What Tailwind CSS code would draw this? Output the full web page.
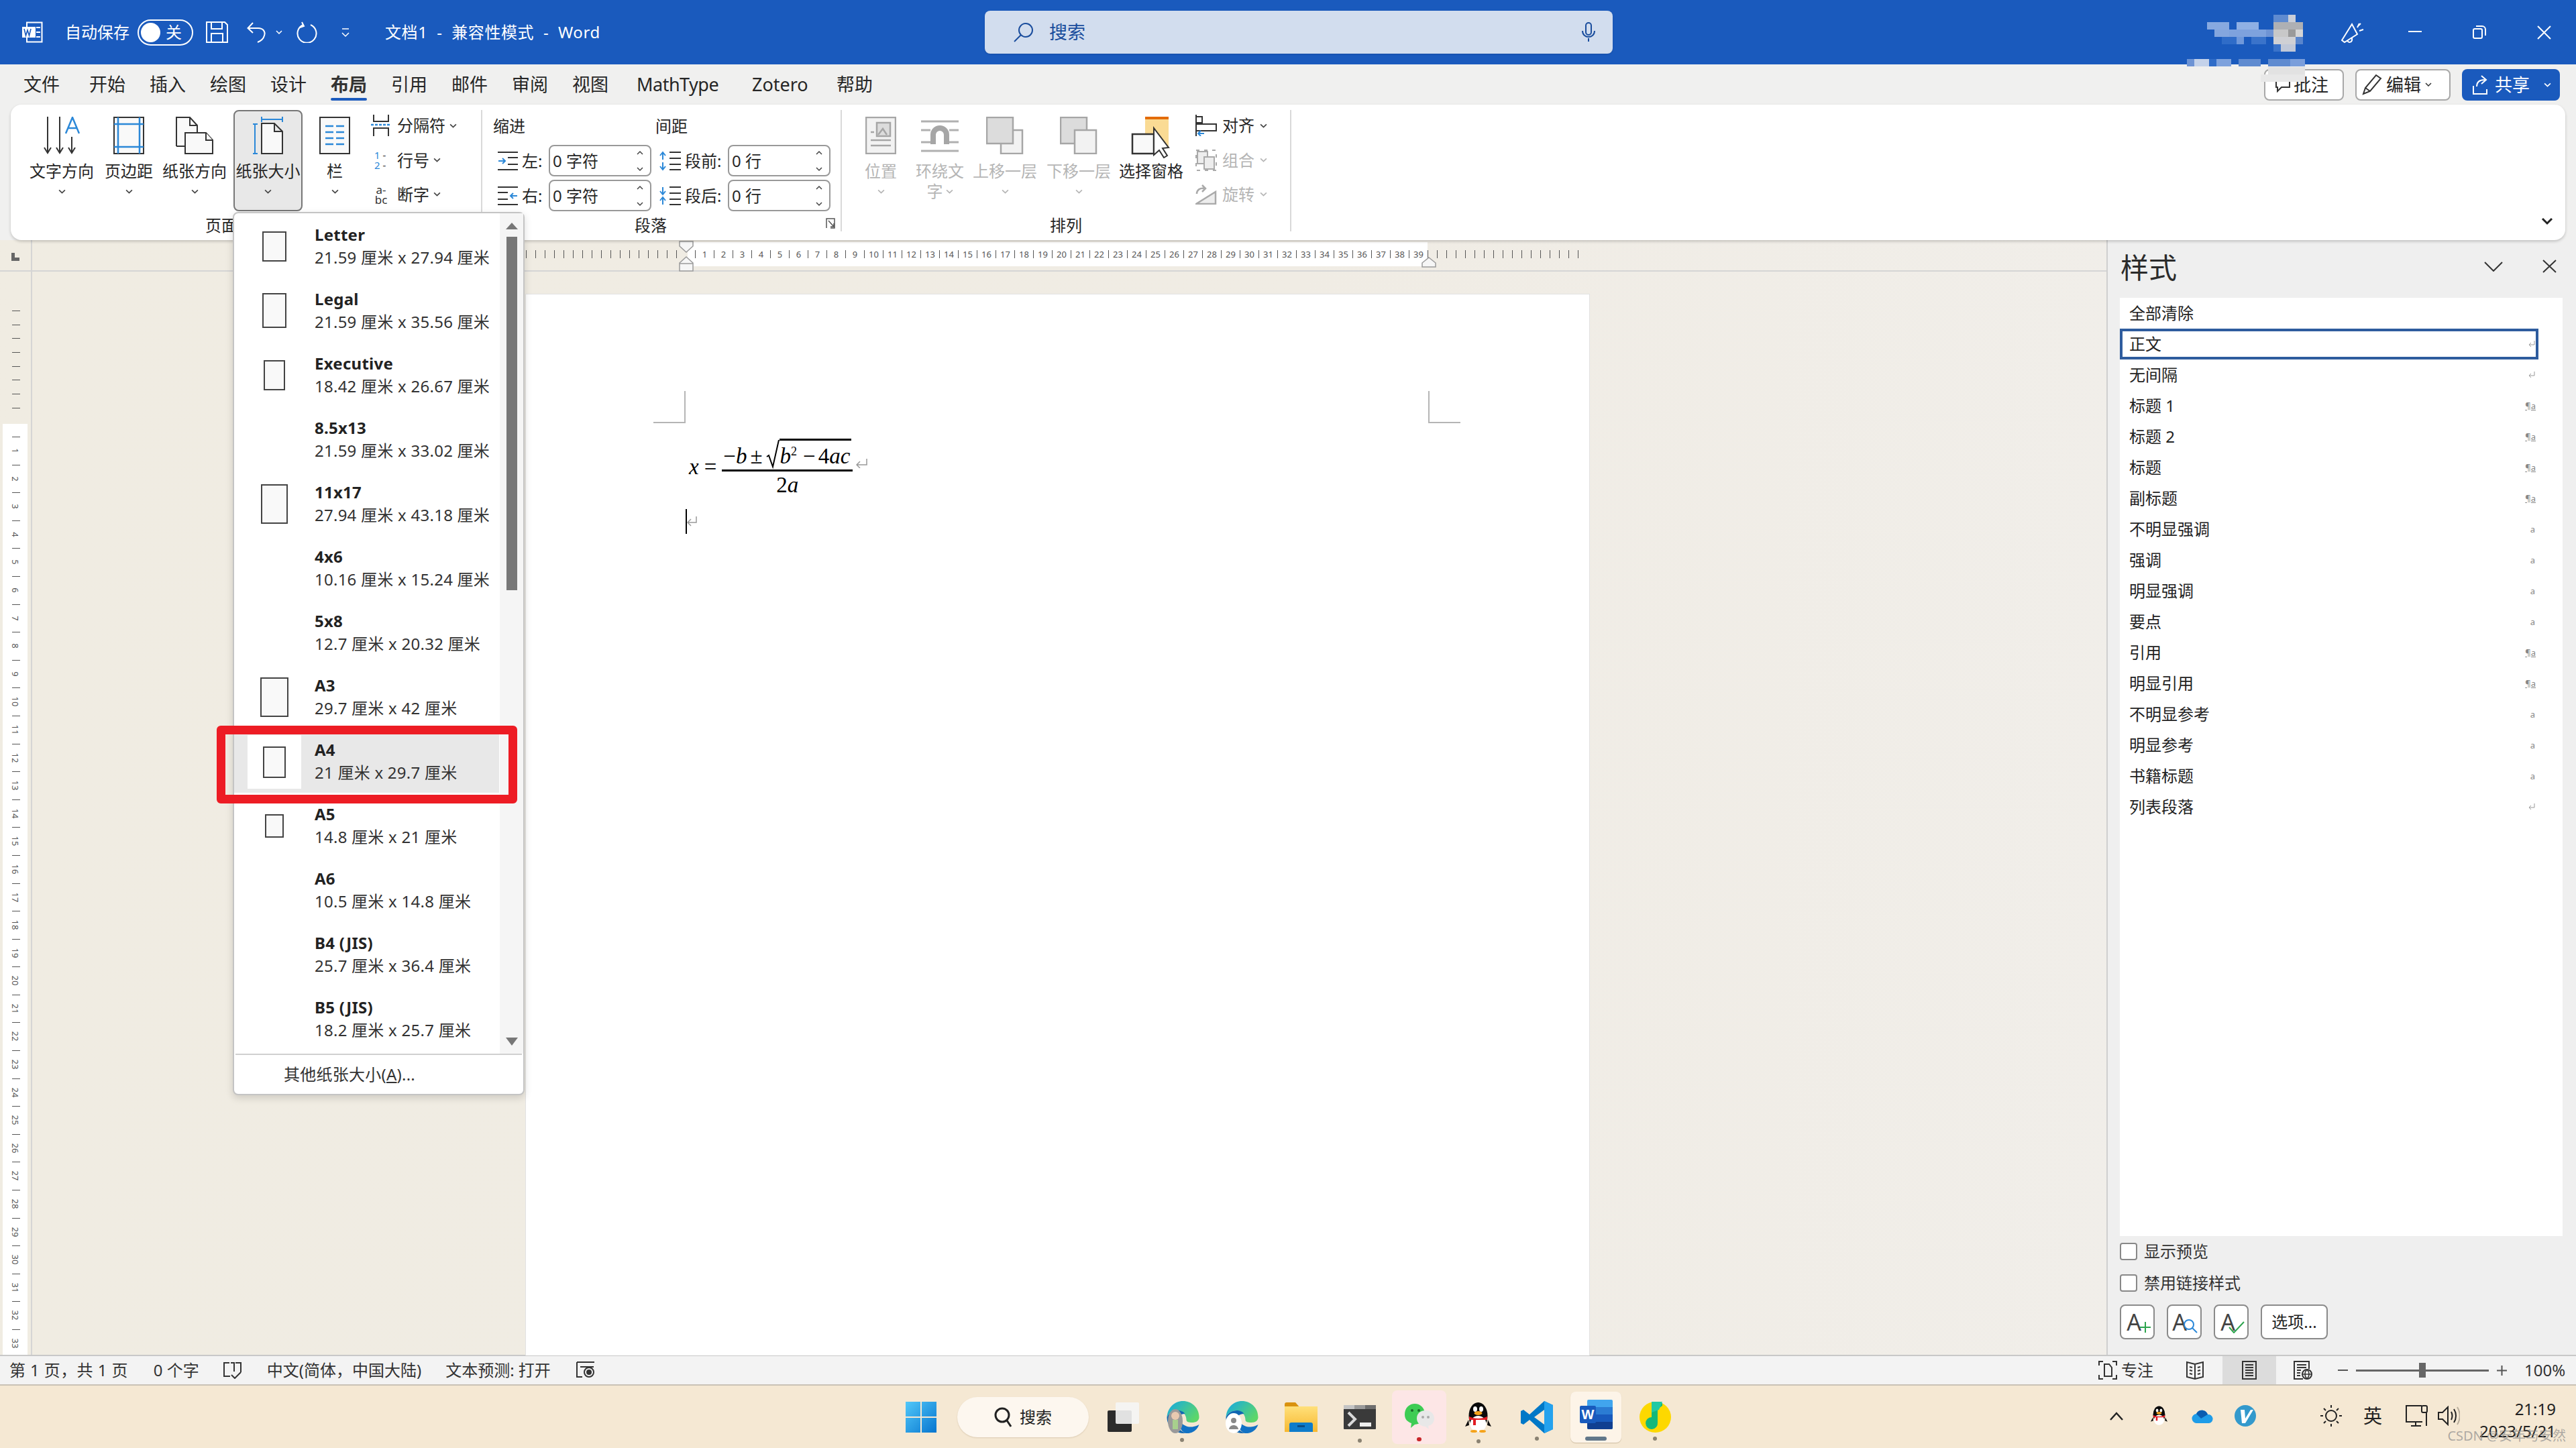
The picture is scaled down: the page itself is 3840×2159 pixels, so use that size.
<!DOCTYPE html>
<html lang="zh-CN">
<head>
  <meta charset="UTF-8">
  <title>文档1 - 兼容性模式 - Word</title>
  <script src="https://cdn.jsdelivr.net/npm/@tailwindcss/browser@4"></script>
</head>
<body class="relative w-[3840px] h-[2159px] overflow-hidden flex flex-col bg-[#f0f0ef] text-[#262626] text-[24px] leading-[28px] font-['Noto_Sans','Noto_Sans_CJK_SC',sans-serif]">

  <!-- Title bar -->
  <header class="h-[96px] shrink-0 bg-[#1a5abd] text-white flex items-center">
    <svg class="ml-[32px]" width="32" height="32" viewBox="0 0 32 32"><rect x="8" y="1.5" width="22.5" height="29" fill="none" stroke="#fff" stroke-width="2"/><rect x="1" y="8" width="20" height="16" fill="#fff"/><path d="M4 11l2.5 10 2.5-8 2.500 8 2.500-10" stroke="#1a5abd" stroke-width="1.600" fill="none"/><path d="M22 9h6M22 16h6M22 23h6" stroke="#fff" stroke-width="2"/></svg>
    <span class="ml-[33px] w-[96px] whitespace-nowrap">自动保存</span>
    <div class="ml-[12px] w-[83px] h-[39px] rounded-full border-2 border-white flex items-center pl-[3px]">
      <span class="w-[29px] h-[29px] rounded-full bg-white"></span><span class="ml-[8px] leading-[26px]">关</span>
    </div>
    <svg class="ml-[19px]" width="33" height="32" viewBox="0 0 33 32" fill="none" stroke="#fff" stroke-width="2"><path d="M1 1h27l4 4v26H1zM8 1v10h16V1M8 31V18h17v13"/></svg>
    <svg class="ml-[28px]" width="30" height="32" viewBox="0 0 30 32" fill="none" stroke="#fff" stroke-width="2"><path d="M2 10h15c7 0 11 5 9 11-1 4-5 8-10 10"/><path d="M9 2L1.500 10 9 17"/></svg>
    <svg class="ml-[13px]" width="10" height="6" viewBox="0 0 10 6" fill="none" stroke="#fff" stroke-width="1.500"><path d="M1 1l4 4 4-4"/></svg>
    <svg class="ml-[20px]" width="33" height="32" viewBox="0 0 33 32" fill="none" stroke="#fff" stroke-width="2"><path d="M11 5a14 14 0 1 0 11 0"/><path d="M9 1l3 6-6 2"/></svg>
    <svg class="ml-[34px]" width="14" height="15" viewBox="0 0 14 15" fill="none" stroke="#fff" stroke-width="1.500"><path d="M2 2h10M2 8l5 5 5-5"/></svg>
    <span class="ml-[52px] whitespace-nowrap tracking-[0.6px]">文档1&nbsp; -&nbsp; 兼容性模式&nbsp; -&nbsp; Word</span>
    <div class="absolute left-[1468px] top-[16px] w-[936px] h-[64px] rounded-[8px] bg-[#d2ddee] shadow-sm text-[#1a4d9d] flex items-center">
      <svg class="ml-[43px]" width="30" height="30" viewBox="0 0 30 30" fill="none" stroke="#1a4d9d" stroke-width="2"><circle cx="18" cy="12" r="10"/><path d="M11 19L1 29"/></svg>
      <span class="ml-[23px] text-[27px]">搜索</span>
      <svg class="ml-auto mr-[26px]" width="20" height="30" viewBox="0 0 20 30" fill="none" stroke="#1a4d9d" stroke-width="2"><rect x="6" y="1" width="8" height="18" rx="4"/><path d="M1 13c0 12 18 12 18 0M10 24v5"/></svg>
    </div>
    <svg class="absolute left-[3490px] top-[32px]" width="34" height="33" viewBox="0 0 34 33" fill="none" stroke="#fff" stroke-width="2"><path d="M1 28L16 4l8 15-19 12zM9 28c2 5 8 3 7-3M24 9l3-6M27 14l6-2M29 3l-3 3"/></svg>
    <span class="absolute left-[3590px] top-[46px] w-[20px] h-[2px] bg-white"></span>
    <svg class="absolute left-[3686px] top-[38px]" width="20" height="20" viewBox="0 0 20 20" fill="none" stroke="#fff" stroke-width="2"><rect x="1" y="5" width="13" height="14" rx="2"/><path d="M5 1h9a5 5 0 0 1 5 5v9"/></svg>
    <svg class="absolute left-[3782px] top-[38px]" width="21" height="21" viewBox="0 0 21 21" stroke="#fff" stroke-width="2"><path d="M1 1l19 19M20 1L1 20"/></svg>
  </header>

  <!-- Menu tabs -->
  <nav class="h-[60px] shrink-0 flex items-center text-[27px] pl-[35px]">
    <span class="mr-[44px]">文件</span>
    <div class="flex gap-[36px]">
      <span>开始</span><span>插入</span><span>绘图</span><span>设计</span>
      <span class="relative font-bold text-[#333]">布局<span class="absolute left-0 right-0 top-[34px] h-[4px] rounded-full bg-[#1a5abd]"></span></span>
      <span>引用</span><span>邮件</span><span>审阅</span><span>视图</span>
    </div>
    <span class="ml-[42px] w-[136px] tracking-[-0.5px]">MathType</span>
    <span class="ml-[36px] w-[90px]">Zotero</span>
    <span class="ml-[36px]">帮助</span>
    <div class="ml-auto mr-[24px] flex gap-[17px] text-[24px]">
      <button class="w-[119px] h-[47px] rounded-[8px] border-2 border-[#a8a8a8] bg-white flex items-center pl-[14px] gap-[4px]">
        <svg width="24" height="24" viewBox="0 0 24 24" fill="none" stroke="#333" stroke-width="2"><path d="M2 4h20v12H10l-6 6v-6H2z"/></svg><span class="text-[26px]">批注</span>
      </button>
      <button class="w-[142px] h-[47px] rounded-[8px] border-2 border-[#a8a8a8] bg-white flex items-center pl-[8px] gap-[6px]">
        <svg width="30" height="32" viewBox="0 0 30 32" fill="none" stroke="#333" stroke-width="2"><path d="M2 30l3-9L21 2l7 5-16 19zM5 21l7 5"/></svg><span class="text-[26px]">编辑</span>
        <svg width="10" height="6" viewBox="0 0 10 6" fill="none" stroke="#333" stroke-width="1.500"><path d="M1 1l4 4 4-4"/></svg>
      </button>
      <button class="w-[146px] h-[47px] rounded-[8px] bg-[#1a5abd] text-white flex items-center pl-[16px] gap-[9px]">
        <svg width="24" height="30" viewBox="0 0 24 30" fill="none" stroke="#fff" stroke-width="2"><path d="M1 17v12h20V22M6 18c0-7 5-10 12-10M13 2l7 6-7 6"/></svg><span class="text-[26px]">共享</span>
        <svg class="ml-[12px]" width="11" height="7" viewBox="0 0 10 6" fill="none" stroke="#fff" stroke-width="1.500"><path d="M1 1l4 4 4-4"/></svg>
      </button>
    </div>
  </nav>

  <!-- Ribbon -->
  <section class="relative z-10 mx-[16px] h-[202px] shrink-0 rounded-[16px] bg-white shadow-[0_2px_4px_rgba(0,0,0,0.2)] flex pt-[8px]">
    <!-- 页面设置 -->
    <div class="w-[703px] h-[181px] border-r-2 border-[#d9d9d9] flex flex-col">
      <div class="h-[151px] flex pl-[28px]">
        <div class="w-[96px] flex flex-col items-center">
          <svg class="mt-[10px]" width="54" height="56" viewBox="0 0 54 56" fill="none" stroke="#333" stroke-width="2"><path d="M6 0v54M1 46l5 8 5-8M24 0v54M19 46l5 8 5-8M42 30v24M37 46l5 8 5-8"/><path d="M33 25L43 1l10 24M36 17h14" stroke="#2b88d8" stroke-width="2.500"/></svg>
          <span class="mt-[11px] whitespace-nowrap">文字方向</span>
          <span class="h-[32px] flex items-center"><svg width="11" height="7" viewBox="0 0 10 6" fill="none" stroke="#444" stroke-width="1.500"><path d="M1 1l4 4 4-4"/></svg></span>
        </div>
        <div class="ml-[16px] w-[72px] flex flex-col items-center">
          <svg class="mt-[10px]" width="46" height="56" viewBox="0 0 46 56" fill="#f9f9f9" stroke="#333" stroke-width="2"><rect x="1" y="1" width="44" height="54"/><path d="M7 1v54M39 1v54M1 11h44M1 45h44" stroke="#2b88d8" stroke-width="2.500"/></svg>
          <span class="mt-[11px] whitespace-nowrap">页边距</span>
          <span class="h-[32px] flex items-center"><svg width="11" height="7" viewBox="0 0 10 6" fill="none" stroke="#444" stroke-width="1.500"><path d="M1 1l4 4 4-4"/></svg></span>
        </div>
        <div class="ml-[14px] w-[96px] flex flex-col items-center">
          <svg class="mt-[10px]" width="56" height="56" viewBox="0 0 56 56" fill="#f9f9f9" stroke="#333" stroke-width="2"><path d="M1 44V1h20l11 12v11M21 1v12h11M1 44h12"/><path d="M14 24h31l10 11v20H14z"/><path d="M45 24v11h10"/></svg>
          <span class="mt-[11px] whitespace-nowrap">纸张方向</span>
          <span class="h-[32px] flex items-center"><svg width="11" height="7" viewBox="0 0 10 6" fill="none" stroke="#444" stroke-width="1.500"><path d="M1 1l4 4 4-4"/></svg></span>
        </div>
        <div class="ml-[10px] w-[103px] rounded-[8px] border-2 border-[#777] bg-[#e8e8e8] flex flex-col items-center">
          <svg class="mt-[8px]" width="46" height="56" viewBox="0 0 46 56" fill="#f9f9f9" stroke="#333" stroke-width="2"><path d="M13 4h31M13 0v8M44 0v8M3 11v45M0 11h7M0 55h7" stroke="#2b88d8"/><path d="M13 10h19l12 12v33H13zM32 10v12h12"/></svg>
          <span class="mt-[11px] whitespace-nowrap">纸张大小</span>
          <span class="h-[32px] flex items-center"><svg width="11" height="7" viewBox="0 0 10 6" fill="none" stroke="#444" stroke-width="1.500"><path d="M1 1l4 4 4-4"/></svg></span>
        </div>
        <div class="ml-[23px] w-[50px] flex flex-col items-center">
          <svg class="mt-[10px]" width="46" height="56" viewBox="0 0 46 56" fill="#f9f9f9" stroke="#333" stroke-width="2"><rect x="1" y="1" width="44" height="54"/><path d="M9 14h12M25 14h12M9 23h12M25 23h12M9 32h12M25 32h12M9 41h12M25 41h12" stroke="#2b88d8" stroke-width="2.500"/></svg>
          <span class="mt-[11px]">栏</span>
          <span class="h-[32px] flex items-center"><svg width="11" height="7" viewBox="0 0 10 6" fill="none" stroke="#444" stroke-width="1.500"><path d="M1 1l4 4 4-4"/></svg></span>
        </div>
        <div class="ml-[29px] -mt-[2px] w-[160px] flex flex-col">
          <div class="h-[52px] flex items-center">
            <svg class="w-[30px]" width="30" height="32" viewBox="0 0 30 32" fill="none" stroke="#333" stroke-width="2"><path d="M4 0v10h22V0M4 32V20h22v12"/><path d="M0 15h30" stroke="#2b88d8" stroke-dasharray="4 2" stroke-width="2.500"/></svg>
            <span class="ml-[9px]">分隔符</span>
            <svg class="ml-[6px]" width="11" height="7" viewBox="0 0 10 6" fill="none" stroke="#444" stroke-width="1.500"><path d="M1 1l4 4 4-4"/></svg>
          </div>
          <div class="h-[54px] flex items-center">
            <span class="w-[30px] pl-[5px] text-[15px] leading-[15px] text-[#2b88d8]">1<span class="text-[#333]"> -</span><br>2<span class="text-[#333]"> -</span></span>
            <span class="ml-[9px]">行号</span>
            <svg class="ml-[6px]" width="11" height="7" viewBox="0 0 10 6" fill="none" stroke="#444" stroke-width="1.500"><path d="M1 1l4 4 4-4"/></svg>
          </div>
          <div class="h-[52px] flex items-center">
            <span class="w-[30px] text-[17px] leading-[15px] text-[#333] text-center">a-<br>bc</span>
            <span class="ml-[9px]">断字</span>
            <svg class="ml-[6px]" width="11" height="7" viewBox="0 0 10 6" fill="none" stroke="#444" stroke-width="1.500"><path d="M1 1l4 4 4-4"/></svg>
          </div>
        </div>
      </div>
      <div class="h-[30px] pl-[290px] pt-[7px] whitespace-nowrap">页面设置</div>
    </div>

    <!-- 段落 -->
    <div class="w-[536px] h-[181px] border-r-2 border-[#d9d9d9] flex flex-col">
      <div class="h-[151px] flex flex-col">
        <div class="h-[52px] flex items-center pb-[4px]"><span class="ml-[16px] w-[242px]">缩进</span><span>间距</span></div>
        <div class="h-[47px] mb-[5px] flex items-center pl-[23px]">
          <svg width="30" height="28" viewBox="0 0 30 28" fill="none" stroke="#333" stroke-width="2"><path d="M0 1h30M15 9h15M15 19h15M0 27h30"/><path d="M1 14h10M7 10l4 4-4 4" stroke="#2b88d8"/></svg>
          <span class="ml-[6px] w-[34px]">左:</span>
          <div class="ml-[6px] w-[153px] h-[47px] rounded-[8px] border-2 border-[#999] flex items-center pl-[4px]"><span class="flex-1">0 字符</span><svg class="mr-[9px]" width="12" height="32" viewBox="0 0 12 32" fill="none" stroke="#444" stroke-width="1.500"><path d="M2 6l4-4 4 4M2 26l4 4 4-4"/></svg></div>
          <svg class="ml-[12px]" width="32" height="30" viewBox="0 0 32 30" fill="none" stroke="#333" stroke-width="2"><path d="M15 2h17M15 11h17M15 20h17M15 28h17"/><path d="M5 13V3M1 7l4-5 4 5M5 17v10M1 23l4 5 4-5" stroke="#2b88d8"/></svg>
          <span class="ml-[6px] w-[52px] whitespace-nowrap">段前:</span>
          <div class="ml-[12px] w-[153px] h-[47px] rounded-[8px] border-2 border-[#999] flex items-center pl-[4px]"><span class="flex-1">0 行</span><svg class="mr-[9px]" width="12" height="32" viewBox="0 0 12 32" fill="none" stroke="#444" stroke-width="1.500"><path d="M2 6l4-4 4 4M2 26l4 4 4-4"/></svg></div>
        </div>
        <div class="h-[47px] flex items-center pl-[23px]">
          <svg width="30" height="28" viewBox="0 0 30 28" fill="none" stroke="#333" stroke-width="2"><path d="M0 1h30M0 9h15M0 19h15M0 27h30"/><path d="M29 14H19M23 10l-4 4 4 4" stroke="#2b88d8"/></svg>
          <span class="ml-[6px] w-[34px]">右:</span>
          <div class="ml-[6px] w-[153px] h-[47px] rounded-[8px] border-2 border-[#999] flex items-center pl-[4px]"><span class="flex-1">0 字符</span><svg class="mr-[9px]" width="12" height="32" viewBox="0 0 12 32" fill="none" stroke="#444" stroke-width="1.500"><path d="M2 6l4-4 4 4M2 26l4 4 4-4"/></svg></div>
          <svg class="ml-[12px]" width="32" height="30" viewBox="0 0 32 30" fill="none" stroke="#333" stroke-width="2"><path d="M15 2h17M15 11h17M15 20h17M15 28h17"/><path d="M5 2v10M1 8l4 5 4-5M5 28V18M1 22l4-5 4 5" stroke="#2b88d8"/></svg>
          <span class="ml-[6px] w-[52px] whitespace-nowrap">段后:</span>
          <div class="ml-[12px] w-[153px] h-[47px] rounded-[8px] border-2 border-[#999] flex items-center pl-[4px]"><span class="flex-1">0 行</span><svg class="mr-[9px]" width="12" height="32" viewBox="0 0 12 32" fill="none" stroke="#444" stroke-width="1.500"><path d="M2 6l4-4 4 4M2 26l4 4 4-4"/></svg></div>
        </div>
      </div>
      <div class="h-[30px] pt-[7px] pr-[32px] text-center relative">段落
        <svg class="absolute right-[8px] top-[10px]" width="14" height="16" viewBox="0 0 14 16" fill="none" stroke="#555" stroke-width="1.500"><path d="M1 15V1h12v14H7M4 4l8 9M12 8v5H7"/></svg>
      </div>
    </div>

    <!-- 排列 -->
    <div class="w-[670px] h-[181px] border-r-2 border-[#d9d9d9] flex flex-col">
      <div class="h-[151px] flex pl-[33px] text-[#b5b5b5]">
        <div class="w-[50px] flex flex-col items-center">
          <svg class="mt-[10px]" width="46" height="56" viewBox="0 0 46 56" fill="#f2f2f2" stroke="#a6a6a6" stroke-width="2.500"><rect x="1" y="1" width="44" height="54"/><rect x="17" y="9" width="20" height="20" fill="#dcdcdc"/><path d="M19 27l7-9 6 9M8 23h5M8 35h30M8 43h30" fill="none"/></svg>
          <span class="mt-[11px]">位置</span>
          <span class="h-[32px] flex items-center"><svg width="11" height="7" viewBox="0 0 10 6" fill="none" stroke="#b5b5b5" stroke-width="1.500"><path d="M1 1l4 4 4-4"/></svg></span>
        </div>
        <div class="ml-[27px] w-[72px] flex flex-col items-center">
          <svg class="mt-[10px]" width="58" height="56" viewBox="0 0 58 56" fill="none" stroke="#b0b0b0" stroke-width="3"><path d="M1 7h56M1 20h14M43 20h14M1 38h14M43 38h14M1 51h56"/><path d="M19 41V27a10 10 0 0 1 20 0v14" stroke-width="8" stroke="#a6a6a6"/></svg>
          <span class="mt-[11px] whitespace-nowrap">环绕文</span>
          <span class="h-[32px] flex items-center gap-[4px] text-[#b5b5b5]">字<svg width="11" height="7" viewBox="0 0 10 6" fill="none" stroke="#b5b5b5" stroke-width="1.500"><path d="M1 1l4 4 4-4"/></svg></span>
        </div>
        <div class="ml-[13px] w-[96px] flex flex-col items-center">
          <svg class="mt-[10px]" width="56" height="56" viewBox="0 0 56 56"><rect x="22" y="20" width="32" height="35" fill="#f2f2f2" stroke="#a6a6a6" stroke-width="2.500"/><rect x="1" y="1" width="39" height="39" fill="#dcdcdc" stroke="#a6a6a6" stroke-width="2.500"/></svg>
          <span class="mt-[11px] whitespace-nowrap">上移一层</span>
          <span class="h-[32px] flex items-center"><svg width="11" height="7" viewBox="0 0 10 6" fill="none" stroke="#b5b5b5" stroke-width="1.500"><path d="M1 1l4 4 4-4"/></svg></span>
        </div>
        <div class="ml-[14px] w-[96px] flex flex-col items-center">
          <svg class="mt-[10px]" width="56" height="56" viewBox="0 0 56 56"><rect x="1" y="1" width="39" height="39" fill="#dcdcdc" stroke="#a6a6a6" stroke-width="2.500"/><rect x="22" y="20" width="32" height="35" fill="#f2f2f2" stroke="#a6a6a6" stroke-width="2.500"/></svg>
          <span class="mt-[11px] whitespace-nowrap">下移一层</span>
          <span class="h-[32px] flex items-center"><svg width="11" height="7" viewBox="0 0 10 6" fill="none" stroke="#b5b5b5" stroke-width="1.500"><path d="M1 1l4 4 4-4"/></svg></span>
        </div>
        <div class="ml-[12px] w-[96px] flex flex-col items-center text-[#262626]">
          <svg class="mt-[10px]" width="60" height="62" viewBox="0 0 60 62"><rect x="21" y="1" width="35" height="44" fill="#fadb94"/><rect x="21" y="0" width="35" height="4" fill="#e36c09"/><rect x="2" y="26" width="32" height="29" fill="#f9f9f9" stroke="#333" stroke-width="2.500"/><path d="M34 17v40l8-7 7 11 5-3-7-11 9-1z" fill="#fff" stroke="#333" stroke-width="2"/></svg>
          <span class="mt-[5px] whitespace-nowrap">选择窗格</span>
        </div>
        <div class="ml-[18px] -mt-[2px] w-[130px] flex flex-col">
          <div class="h-[52px] flex items-center text-[#262626]">
            <svg class="w-[32px]" width="32" height="32" viewBox="0 0 32 32" fill="none" stroke="#333" stroke-width="2"><path d="M1 0v32M1 3h9v9H1M1 14h30v10H1"/><path d="M13 28H4M8 24l-4 4 4 4" stroke="#2b88d8"/></svg>
            <span class="ml-[8px]">对齐</span>
            <svg class="ml-[8px]" width="11" height="7" viewBox="0 0 10 6" fill="none" stroke="#444" stroke-width="1.500"><path d="M1 1l4 4 4-4"/></svg>
          </div>
          <div class="h-[54px] flex items-center">
            <svg class="w-[32px]" width="32" height="32" viewBox="0 0 32 32" fill="#ededed" stroke="#aaa" stroke-width="2"><rect x="1" y="1" width="30" height="30" fill="none" stroke-dasharray="5 7"/><rect x="3" y="3" width="15" height="18"/><rect x="13" y="11" width="15" height="18"/></svg>
            <span class="ml-[8px]">组合</span>
            <svg class="ml-[8px]" width="11" height="7" viewBox="0 0 10 6" fill="none" stroke="#b5b5b5" stroke-width="1.500"><path d="M1 1l4 4 4-4"/></svg>
          </div>
          <div class="h-[52px] flex items-center">
            <svg class="w-[32px]" width="32" height="30" viewBox="0 0 32 30" fill="none" stroke="#aaa" stroke-width="2.500"><path d="M2 14c0-6 5-9 11-8M10 1l5 5-5 5"/><path d="M1 29L30 11v18z" fill="#ededed"/></svg>
            <span class="ml-[8px]">旋转</span>
            <svg class="ml-[8px]" width="11" height="7" viewBox="0 0 10 6" fill="none" stroke="#b5b5b5" stroke-width="1.500"><path d="M1 1l4 4 4-4"/></svg>
          </div>
        </div>
      </div>
      <div class="h-[30px] pt-[7px] text-center">排列</div>
    </div>
    <svg class="absolute right-[18px] top-[168px]" width="18" height="12" viewBox="0 0 18 12" fill="none" stroke="#222" stroke-width="3"><path d="M2 2l7 7 7-7"/></svg>
  </section>

  <!-- Document area -->
  <main class="h-[1663px] shrink-0 flex bg-gradient-to-r from-[#f0ece2] via-[#f0ece4] to-[#f1efec]">
    <!-- vertical ruler -->
    <div class="w-[48px] shrink-0 border-r-2 border-[#d5d5d5] flex flex-col">
      <div class="h-[47px] shrink-0 border-b-2 border-[#d5d5d5] pt-[19px] pl-[17px] w-[48px]">
        <span class="block w-[12px] h-[12px] border-l-[5px] border-b-[5px] border-[#666]"></span>
      </div>
      <div id="vruler-top" class="h-[227px] shrink-0 pt-[58px] pl-[18px] flex flex-col"></div>
      <div id="vruler" class="ml-[4px] w-[37px] flex-1 bg-white flex flex-col overflow-hidden pt-[19px]"></div>
    </div>
    <!-- ruler + page -->
    <div class="w-[3092px] shrink-0 flex flex-col">
      <div class="h-[47px] shrink-0 border-b-2 border-[#d5d5d5] pt-[3px] pl-[736px] flex">
        <div id="hruler-left" class="w-[241px] h-[36px] flex items-center"></div>
        <div id="hruler" class="relative w-[1103px] h-[36px] bg-white pl-[11px] flex items-center">
          <!-- indent markers -->
          <svg class="absolute z-[1] left-[-13px] top-[-2px]" width="22" height="46" viewBox="0 0 22 46" fill="#f6f6f6" stroke="#9a9a9a" stroke-width="1.500"><path d="M1 1h20v7l-10 9L1 8z"/><path d="M11 24l10 9v12H1V33z"/><path d="M1 34h20"/></svg>
          <svg class="absolute z-[1] left-[1094px] top-[22px]" width="22" height="16" viewBox="0 0 22 16" fill="#f6f6f6" stroke="#9a9a9a" stroke-width="1.500"><path d="M11 1l10 8v6H1V9z"/></svg>
        </div>
        <div id="hruler-right" class="w-[242px] h-[36px] flex items-center"></div>
      </div>
      <div class="flex-1 pt-[33px] pl-[735px] overflow-hidden">
        <div class="relative w-[1587px] h-[1620px] bg-white border border-[#e2e2e2] pt-[212px] pl-[243px]">
          <span class="absolute left-[190px] top-[144px] w-[48px] h-[48px] border-r-2 border-b-2 border-[#b5b5b5]"></span>
          <span class="absolute left-[1345px] top-[144px] w-[48px] h-[48px] border-l-2 border-b-2 border-[#b5b5b5]"></span>
          <div class="flex items-center font-['Liberation_Serif',serif] text-[33px] leading-[36px] text-black">
            <span class="italic">x</span><span class="ml-[8px] mr-[8px]">=</span>
            <div class="w-[195px] flex flex-col items-center">
              <div class="h-[49px] w-full flex items-end pb-[2px] pl-[2px] whitespace-nowrap">
                <span>−</span><span class="italic">b</span><span class="ml-[5px]">±</span>
                <svg class="ml-[5px] self-end mb-[-2px]" width="20" height="46" viewBox="0 0 20 46" fill="none" stroke="#000"><path d="M1 27l3-2 6 17L19 2" stroke-width="2"/></svg>
                <span class="border-t-[3px] border-black w-[107px] h-[44px] pt-[2px] pl-[1px] flex items-end leading-[36px]"><span class="italic">b</span><sup class="text-[18px] -top-[3px] relative leading-none self-start mt-[8px]">2</sup><span class="ml-[9px]">−</span><span class="ml-[4px]">4</span><span class="italic">ac</span></span>
              </div>
              <div class="h-[2.500px] w-full bg-black"></div>
              <div class="h-[38px] leading-[40px]">2<span class="italic">a</span></div>
            </div>
            <svg class="ml-[5px] mb-[10px]" width="17" height="14" viewBox="0 0 17 14" fill="none" stroke="#999" stroke-width="1.500"><path d="M16 0v9H1M6 4L1 9l5 5"/></svg>
          </div>
          <div class="mt-[18px] -ml-[5px] flex items-center">
            <span class="w-[2px] h-[37px] bg-black"></span>
            <svg width="15" height="15" viewBox="0 0 15 15" fill="none" stroke="#999" stroke-width="1.500"><path d="M14 0v9H1M6 4L1 9l5 5"/></svg>
          </div>
        </div>
      </div>
    </div>

    <!-- Styles panel -->
    <aside class="w-[700px] shrink-0 bg-[#efefef] border-l-2 border-[#cfcfcf] flex flex-col">
      <div class="h-[86px] shrink-0 relative pl-[19px] pt-[14px]">
        <span class="text-[42px] leading-[54px] text-[#2b2b2b]">样式</span>
        <svg class="absolute left-[561px] top-[32px]" width="28" height="15" viewBox="0 0 28 15" fill="none" stroke="#333" stroke-width="2"><path d="M1 1l13 13L27 1"/></svg>
        <svg class="absolute left-[648px] top-[29px]" width="21" height="20" viewBox="0 0 21 20" fill="none" stroke="#333" stroke-width="2"><path d="M1 1l19 18M20 1L1 19"/></svg>
      </div>
      <div class="ml-[18px] w-[660px] h-[1399px] shrink-0 bg-white">
        <div class="w-[624px] text-[#222]">
          <div class="h-[46px] pl-[14px] flex items-center">全部清除</div>
          <div class="h-[46px] pl-[10px] pr-[1px] border-[4px] border-[#2e5c9e] flex items-center justify-between">正文<svg width="10" height="10" viewBox="0 0 10 10" fill="none" stroke="#999"><path d="M9 0v6H1M4 3L1 6l3 3"/></svg></div>
          <div class="h-[46px] pl-[14px] pr-[5px] flex items-center justify-between">无间隔<svg width="10" height="10" viewBox="0 0 10 10" fill="none" stroke="#999"><path d="M9 0v6H1M4 3L1 6l3 3"/></svg></div>
          <div class="h-[46px] pl-[14px] pr-[4px] flex items-center justify-between">标题 1<span class="text-[13px] text-[#888] underline">¶a</span></div>
          <div class="h-[46px] pl-[14px] pr-[4px] flex items-center justify-between">标题 2<span class="text-[13px] text-[#888] underline">¶a</span></div>
          <div class="h-[46px] pl-[14px] pr-[4px] flex items-center justify-between">标题<span class="text-[13px] text-[#888] underline">¶a</span></div>
          <div class="h-[46px] pl-[14px] pr-[4px] flex items-center justify-between">副标题<span class="text-[13px] text-[#888] underline">¶a</span></div>
          <div class="h-[46px] pl-[14px] pr-[5px] flex items-center justify-between">不明显强调<span class="text-[13px] text-[#888]">a</span></div>
          <div class="h-[46px] pl-[14px] pr-[5px] flex items-center justify-between">强调<span class="text-[13px] text-[#888]">a</span></div>
          <div class="h-[46px] pl-[14px] pr-[5px] flex items-center justify-between">明显强调<span class="text-[13px] text-[#888]">a</span></div>
          <div class="h-[46px] pl-[14px] pr-[5px] flex items-center justify-between">要点<span class="text-[13px] text-[#888]">a</span></div>
          <div class="h-[46px] pl-[14px] pr-[4px] flex items-center justify-between">引用<span class="text-[13px] text-[#888] underline">¶a</span></div>
          <div class="h-[46px] pl-[14px] pr-[4px] flex items-center justify-between">明显引用<span class="text-[13px] text-[#888] underline">¶a</span></div>
          <div class="h-[46px] pl-[14px] pr-[5px] flex items-center justify-between">不明显参考<span class="text-[13px] text-[#888]">a</span></div>
          <div class="h-[46px] pl-[14px] pr-[5px] flex items-center justify-between">明显参考<span class="text-[13px] text-[#888]">a</span></div>
          <div class="h-[46px] pl-[14px] pr-[5px] flex items-center justify-between">书籍标题<span class="text-[13px] text-[#888]">a</span></div>
          <div class="h-[46px] pl-[14px] pr-[5px] flex items-center justify-between">列表段落<svg width="10" height="10" viewBox="0 0 10 10" fill="none" stroke="#999"><path d="M9 0v6H1M4 3L1 6l3 3"/></svg></div>
        </div>
      </div>
      <div class="ml-[18px] mt-[10px] flex items-center h-[26px] text-[#333]"><span class="w-[26px] h-[26px] rounded-[4px] border-2 border-[#888] bg-white"></span><span class="ml-[10px]">显示预览</span></div>
      <div class="ml-[18px] mt-[21px] flex items-center h-[26px] text-[#333]"><span class="w-[26px] h-[26px] rounded-[4px] border-2 border-[#888] bg-white"></span><span class="ml-[10px]">禁用链接样式</span></div>
      <div class="ml-[18px] mt-[19px] flex gap-[18px] text-[#222]">
        <button class="relative w-[52px] h-[52px] rounded-[8px] border-2 border-[#8a8a8a] bg-white text-[34px] leading-[42px] pr-[10px] text-[#444]">A<svg class="absolute right-[4px] bottom-[8px]" width="16" height="16" viewBox="0 0 16 16" stroke="#2da44e" stroke-width="2"><path d="M8 0v16M0 8h16"/></svg></button>
        <button class="relative w-[52px] h-[52px] rounded-[8px] border-2 border-[#8a8a8a] bg-white text-[34px] leading-[42px] pr-[14px] text-[#444]">A<svg class="absolute right-[4px] bottom-[7px]" width="22" height="22" viewBox="0 0 22 22" fill="#fff" stroke="#2b88d8" stroke-width="2"><circle cx="9" cy="9" r="7"/><path d="M14 14l7 7"/></svg></button>
        <button class="relative w-[52px] h-[52px] rounded-[8px] border-2 border-[#8a8a8a] bg-white text-[34px] leading-[42px] pr-[10px] text-[#444]">A<svg class="absolute right-[4px] bottom-[7px]" width="24" height="18" viewBox="0 0 24 18" fill="none" stroke="#2da44e" stroke-width="2"><path d="M1 9l7 8L23 1"/></svg></button>
        <button class="w-[100px] h-[52px] rounded-[8px] border-2 border-[#8a8a8a] bg-white">选项...</button>
      </div>
    </aside>
  </main>

  <!-- Status bar -->
  <footer class="h-[46px] shrink-0 -mt-[1px] border-t-2 border-b-2 border-t-[#c8c8c8] border-b-[#c9c2b6] bg-[#f3f3f3] flex items-center text-[#333]">
    <span class="ml-[14px] whitespace-nowrap tracking-[0.4px]">第 1 页，共 1 页</span>
    <span class="ml-[38px] whitespace-nowrap">0 个字</span>
    <svg class="ml-[36px]" width="28" height="26" viewBox="0 0 28 26" fill="none" stroke="#333" stroke-width="2"><path d="M9 2H1v20h9M18 2h8v14M11 2h5v13M12 20l5 5 9-9"/></svg>
    <span class="ml-[37px] whitespace-nowrap">中文(简体，中国大陆)</span>
    <span class="ml-[36px] whitespace-nowrap">文本预测: 打开</span>
    <svg class="ml-[38px]" width="28" height="26" viewBox="0 0 28 26" fill="none" stroke="#333" stroke-width="2"><path d="M1 1h26M1 1v22h8M6 8h20"/><circle cx="19" cy="16" r="7"/><circle cx="19" cy="16" r="3" fill="#333"/></svg>
    <div class="ml-auto flex items-center h-[42px]">
      <svg width="28" height="28" viewBox="0 0 28 28" fill="none" stroke="#333" stroke-width="2"><path d="M1 7V1h6M21 1h6v6M27 21v6h-6M7 27H1v-6M9 5h7l4 5v13H9z"/></svg>
      <span class="ml-[6px]">专注</span>
      <svg class="ml-[49px]" width="26" height="28" viewBox="0 0 26 28" fill="none" stroke="#333" stroke-width="2"><path d="M13 5L1 2v22l12 3 12-3V2zM13 5v22M5 9l4 1M5 14l4 1M5 19l4 1M21 9l-4 1M21 14l-4 1M21 19l-4 1"/></svg>
      <div class="ml-[28px] w-[80px] h-[42px] bg-[#dcdcdc] flex items-center justify-center">
        <svg width="22" height="28" viewBox="0 0 22 28" fill="none" stroke="#333" stroke-width="2"><rect x="1" y="1" width="20" height="26"/><path d="M5 6h12M5 10h12M5 14h12M5 18h12M5 22h12"/></svg>
      </div>
      <svg class="ml-[26px]" width="28" height="28" viewBox="0 0 28 28" fill="none" stroke="#333" stroke-width="2"><path d="M14 27H1V1h22v11M5 6h14M5 10h14M5 14h6M5 18h5M5 22h5"/><circle cx="20" cy="20" r="7"/><path d="M13 20h14M20 13c-4 4-4 10 0 14M20 13c4 4 4 10 0 14" stroke-width="1.500"/></svg>
      <span class="ml-[38px] w-[15px] h-[2px] bg-[#555]"></span>
      <div class="ml-[12px] relative w-[198px] h-[3px] bg-[#666]"><span class="absolute left-[94px] -top-[10px] w-[10px] h-[22px] bg-[#666]"></span></div>
      <svg class="ml-[12px]" width="15" height="15" viewBox="0 0 15 15" stroke="#555" stroke-width="2"><path d="M7.500 0v15M0 7.500h15"/></svg>
      <span class="ml-[26px] mr-[16px] w-[61px]">100%</span>
    </div>
  </footer>

  <!-- Taskbar -->
  <div class="relative h-[94px] shrink-0 bg-[#f5e8d3] flex items-center pl-[1350px] text-[#222]">
    <svg width="46" height="46" viewBox="0 0 46 46"><defs><linearGradient id="win" x1="0" y1="0" x2="1" y2="1"><stop offset="0" stop-color="#52c8f9"/><stop offset="1" stop-color="#0675cf"/></linearGradient></defs><path d="M0 0h22v22H0zM24 0h22v22H24zM0 24h22v22H0zM24 24h22v22H24z" fill="url(#win)"/></svg>
    <div class="ml-[31px] w-[196px] h-[60px] rounded-full bg-[#fdf7ef] shadow-[0_1px_2px_rgba(120,90,50,0.2)] flex items-center pl-[55px]">
      <svg width="28" height="30" viewBox="0 0 28 30" fill="none" stroke="#222" stroke-width="3"><circle cx="12" cy="12" r="10"/><path d="M19 20l6 9"/></svg>
      <span class="ml-[10px] whitespace-nowrap">搜索</span>
    </div>
    <svg class="ml-[28px]" width="47" height="44" viewBox="0 0 47 44"><rect x="0" y="12" width="36" height="32" rx="2" fill="#2b2b2b"/><rect x="12" y="0" width="35" height="32" rx="2" fill="#f5f5f5" fill-opacity="0.9"/></svg>
    <div class="relative ml-[41px] w-[49px] h-[48px]">
      <svg width="49" height="48" viewBox="0 0 48 48"><defs><linearGradient id="edge" x1="0" y1="0" x2="1" y2="0.6"><stop offset="0" stop-color="#14a8e6"/><stop offset="1" stop-color="#5cd66a"/></linearGradient></defs><path d="M24 0c13 0 24 10 24 24 0 5-4 8-10 8-6 0-9-1-9-4 0-8-6-14-13-14C9 14 3 18 0 24 1 10 11 0 24 0z" fill="url(#edge)"/><path d="M0 24c3-6 9-10 16-10 5 0 9 2 11 5-8 0-13 5-13 12s6 14 14 17C12 49 0 38 0 24z" fill="#0f66b2"/><path d="M28 48c9 1 17-4 20-13-4 3-14 5-20 2-5-2-8-5-9-9-2 10 2 17 9 20z" fill="#1272c4"/></svg>
      <svg class="absolute left-[1px] bottom-0" width="24" height="36" viewBox="0 0 24 36"><ellipse cx="12" cy="18" rx="11" ry="18" fill="#9a9a9a"/><circle cx="12" cy="10" r="6" fill="#e8c9b0"/><rect x="8" y="16" width="8" height="14" fill="#a8d08d"/></svg>
      <span class="absolute left-[20px] top-[55px] w-[6px] h-[6px] rounded-full bg-[#8a8272]"></span>
    </div>
    <div class="relative ml-[39px] w-[49px] h-[48px]">
      <svg width="49" height="48" viewBox="0 0 48 48"><defs><linearGradient id="edge2" x1="0" y1="0" x2="1" y2="0.6"><stop offset="0" stop-color="#14a8e6"/><stop offset="1" stop-color="#5cd66a"/></linearGradient></defs><path d="M24 0c13 0 24 10 24 24 0 5-4 8-10 8-6 0-9-1-9-4 0-8-6-14-13-14C9 14 3 18 0 24 1 10 11 0 24 0z" fill="url(#edge2)"/><path d="M0 24c3-6 9-10 16-10 5 0 9 2 11 5-8 0-13 5-13 12s6 14 14 17C12 49 0 38 0 24z" fill="#0f66b2"/><path d="M28 48c9 1 17-4 20-13-4 3-14 5-20 2-5-2-8-5-9-9-2 10 2 17 9 20z" fill="#1272c4"/></svg>
      <svg class="absolute left-0 bottom-0" width="24" height="30" viewBox="0 0 24 30"><ellipse cx="12" cy="15" rx="12" ry="15" fill="#fff"/><circle cx="12" cy="11" r="4" fill="#888"/><path d="M5 24c1-8 13-8 14 0z" fill="#888"/></svg>
    </div>
    <svg class="ml-[39px]" width="49" height="44" viewBox="0 0 49 44"><defs><linearGradient id="fold" x1="0" y1="0" x2="0" y2="1"><stop offset="0" stop-color="#ffe07a"/><stop offset="1" stop-color="#f7b830"/></linearGradient></defs><path d="M0 3a3 3 0 0 1 3-3h13l7 8H0z" fill="#d9920f"/><path d="M0 6h49v38H0z" fill="url(#fold)"/><path d="M7 44V33a3 3 0 0 1 3-3h29a3 3 0 0 1 3 3v11z" fill="#0e7ccb"/><rect x="19" y="34" width="11" height="3" fill="#0a4d87"/></svg>
    <div class="relative ml-[39px] w-[48px] h-[36px]">
      <svg width="48" height="36" viewBox="0 0 48 36"><rect y="0" width="48" height="36" rx="1" fill="#3a3a3a"/><rect x="0" y="0" width="16" height="6" fill="#c4c4c4"/><rect x="16" y="0" width="16" height="6" fill="#9a9a9a"/><rect x="32" y="0" width="16" height="6" fill="#6e6e6e"/><path d="M7 11l10 10-10 10" fill="none" stroke="#d9d9d9" stroke-width="4"/><rect x="24" y="26" width="17" height="6" fill="#eee"/></svg>
      <span class="absolute left-[21px] top-[50px] w-[6px] h-[6px] rounded-full bg-[#8a8272]"></span>
    </div>
    <div class="relative ml-[24px] w-[81px] h-[80px] rounded-[8px] bg-[#fde6e6] flex items-center justify-center pb-[4px]">
      <svg width="50" height="40" viewBox="0 0 50 40"><path d="M3 18C3 8 10 2 18 2s15 6 15 16-7 14-15 15l-6 5 1-7C7 29 3 25 3 18z" fill="#3ecc54"/><path d="M21 24c0-8 6-12 13-12s13 4 13 12c0 6-4 10-9 11l1 5-5-4c-7 0-13-5-13-12z" fill="#e8e8e8"/><circle cx="14" cy="12" r="2" fill="#1a6d2a"/><circle cx="24" cy="12" r="2" fill="#1a6d2a"/><circle cx="30" cy="22" r="2" fill="#aaa"/><circle cx="38" cy="22" r="2" fill="#aaa"/></svg>
      <span class="absolute left-[37px] bottom-[4px] w-[7px] h-[6px] rounded-full bg-[#c8262a]"></span>
    </div>
    <div class="relative ml-[28px] w-[39px] h-[45px]">
      <svg width="39" height="45" viewBox="0 0 39 45"><ellipse cx="19.500" cy="20" rx="14" ry="20" fill="#0a0a0a"/><path d="M5 26L0 36l6-2zM34 26l5 10-6-2z" fill="#0a0a0a"/><ellipse cx="19.500" cy="32" rx="12" ry="12" fill="#fff"/><ellipse cx="15" cy="10" rx="3" ry="4" fill="#fff"/><ellipse cx="24" cy="10" rx="3" ry="4" fill="#fff"/><ellipse cx="19.500" cy="16" rx="6" ry="3" fill="#f5a31a"/><path d="M6 21c8 4 19 4 27 0v5H16v8h-4v-8H6z" fill="#e11b22"/><ellipse cx="13" cy="43" rx="5" ry="2" fill="#f5a31a"/><ellipse cx="26" cy="43" rx="5" ry="2" fill="#f5a31a"/></svg>
      <span class="absolute left-[17px] top-[55px] w-[6px] h-[6px] rounded-full bg-[#8a8272]"></span>
    </div>
    <div class="relative ml-[44px] w-[48px] h-[48px]">
      <svg width="48" height="48" viewBox="0 0 48 48"><path d="M35 0l13 6v36l-13 6-22-20-9 7-4-2V15l4-2 9 7z" fill="#0078c7"/><path d="M35 0l13 6v36l-13 6z" fill="#24a2ee"/><path d="M35 13L20 24l15 11z" fill="#f5e8d3"/></svg>
      <span class="absolute left-[21px] top-[53px] w-[6px] h-[6px] rounded-full bg-[#8a8272]"></span>
    </div>
    <div class="relative ml-[26px] w-[76px] h-[76px] rounded-[8px] bg-[#fdf4e8] shadow-[0_1px_1px_rgba(120,90,50,0.3)] flex items-center justify-center pb-[8px]">
      <svg width="49" height="44" viewBox="0 0 49 44"><rect x="11" y="0" width="38" height="44" rx="2" fill="#41a5ee"/><rect x="11" y="11" width="38" height="11" fill="#2b7cd3"/><rect x="11" y="22" width="38" height="11" fill="#185abd"/><path d="M11 33h38v9a2 2 0 0 1-2 2H13a2 2 0 0 1-2-2z" fill="#103f91"/><rect x="0" y="9" width="24" height="26" rx="2" fill="#185abd"/><text x="12" y="29" text-anchor="middle" font-family="Liberation Sans" font-size="20" font-weight="700" fill="#fff">W</text></svg>
      <span class="absolute left-[22px] bottom-[3px] w-[32px] h-[6px] rounded-full bg-[#62788a]"></span>
    </div>
    <div class="relative ml-[27px] w-[47px] h-[46px]">
      <svg width="47" height="46" viewBox="0 0 47 46"><ellipse cx="23.500" cy="23" rx="23.500" ry="23" fill="#fdd800"/><path d="M18 2h16v4l-7 5v20a9 9 0 1 1-9-8z" fill="#14b87a"/><path d="M18 0l16 0-5 12-11 4z" fill="#1fc9a4"/></svg>
      <span class="absolute left-[20px] top-[52px] w-[6px] h-[6px] rounded-full bg-[#8a8272]"></span>
    </div>

    <!-- tray -->
    <div class="absolute right-0 top-0 h-[94px] w-[695px] flex items-center pb-[4px]">
      <svg width="20" height="13" viewBox="0 0 20 13" fill="none" stroke="#222" stroke-width="2.500"><path d="M1 12l9-10 9 10"/></svg>
      <svg class="ml-[41px]" width="25" height="30" viewBox="0 0 39 45"><ellipse cx="19.500" cy="20" rx="14" ry="20" fill="#0a0a0a"/><path d="M5 26L0 36l6-2zM34 26l5 10-6-2z" fill="#0a0a0a"/><ellipse cx="19.500" cy="32" rx="12" ry="12" fill="#fff"/><ellipse cx="15" cy="10" rx="3" ry="4" fill="#fff"/><ellipse cx="24" cy="10" rx="3" ry="4" fill="#fff"/><ellipse cx="19.500" cy="16" rx="6" ry="3" fill="#f5a31a"/><path d="M6 21c8 4 19 4 27 0v5H16v8h-4v-8H6z" fill="#e11b22"/></svg>
      <svg class="ml-[36px]" width="33" height="21" viewBox="0 0 33 21"><path d="M8 21a7 7 0 0 1-1-14C10 0 21 0 24 8a6.500 6.500 0 0 1 2 13z" fill="#1e9ce8"/><path d="M7 7C10 0 21 0 24 8l-10 6z" fill="#0a5cb0"/></svg>
      <svg class="ml-[31px]" width="32" height="32" viewBox="0 0 32 32"><circle cx="16" cy="16" r="16" fill="#3399cc"/><path d="M9 7h6l1 13 8-13h4L16 27h-5z" fill="#fff"/></svg>
      <svg class="ml-[96px]" width="32" height="32" viewBox="0 0 32 32" fill="none" stroke="#222" stroke-width="2"><circle cx="16" cy="16" r="8"/><path d="M16 0v4M16 28v4M0 16h4M28 16h4M5 5l3 3M24 24l3 3M5 27l3-3M24 8l3-3"/></svg>
      <span class="ml-[32px] text-[28px]">英</span>
      <svg class="ml-[35px]" width="33" height="32" viewBox="0 0 33 32" fill="none" stroke="#222" stroke-width="2"><path d="M24 1H1v24h24M8 31h15M15 25v6M31 6v25"/><rect x="24" y="1" width="8" height="10" rx="2" fill="#f5e8d3"/></svg>
      <svg class="ml-[15px]" width="33" height="30" viewBox="0 0 33 30" fill="none" stroke="#222" stroke-width="2"><path d="M1 10h6l8-8v26l-8-8H1zM20 9c2 4 2 8 0 12M24 5c4 6 4 14 0 20"/><path d="M29 2c5 8 5 18 0 26" stroke="#b8ad9b"/></svg>
      <div class="absolute right-[30px] top-[18px] text-right leading-[33px] text-[#222]"><div>21:19</div><div>2023/5/21</div></div>
      <span class="absolute right-[15px] top-[62px] text-[20px] leading-[26px] text-[#8c8c8c]/70 whitespace-nowrap">CSDN @安年与安然</span>
    </div>
  </div>

  <!-- 纸张大小 dropdown -->
  <div class="absolute z-20 left-[347px] top-[316px] w-[435px] h-[1317px] rounded-[8px] border-2 border-[#c4c4c4] bg-white shadow-[0_4px_12px_rgba(0,0,0,0.15)] flex flex-col text-[#333] tracking-[0.25px]">
    <div class="relative h-[1253px] shrink-0 pr-[36px]">
      <div class="h-[96px] flex items-start pt-[11px]"><span class="w-[120px] h-[76px] flex items-center justify-center"><span class="w-[36px] h-[45px] border-2 border-[#444] bg-[#f9f9f9]"></span></span><span class="mt-[4px] leading-[34px]"><b class="font-bold text-[#222]">Letter</b><br>21.59 厘米 x 27.94 厘米</span></div>
      <div class="h-[96px] flex items-start pt-[11px]"><span class="w-[120px] h-[76px] flex items-center justify-center"><span class="w-[36px] h-[52px] border-2 border-[#444] bg-[#f9f9f9]"></span></span><span class="mt-[4px] leading-[34px]"><b class="font-bold text-[#222]">Legal</b><br>21.59 厘米 x 35.56 厘米</span></div>
      <div class="h-[96px] flex items-start pt-[11px]"><span class="w-[120px] h-[76px] flex items-center justify-center"><span class="w-[32px] h-[45px] border-2 border-[#444] bg-[#f9f9f9]"></span></span><span class="mt-[4px] leading-[34px]"><b class="font-bold text-[#222]">Executive</b><br>18.42 厘米 x 26.67 厘米</span></div>
      <div class="h-[96px] flex items-start pt-[11px]"><span class="w-[120px] h-[76px]"></span><span class="mt-[4px] leading-[34px]"><b class="font-bold text-[#222]">8.5x13</b><br>21.59 厘米 x 33.02 厘米</span></div>
      <div class="h-[96px] flex items-start pt-[11px]"><span class="w-[120px] h-[76px] flex items-center justify-center"><span class="w-[40px] h-[59px] border-2 border-[#444] bg-[#f9f9f9]"></span></span><span class="mt-[4px] leading-[34px]"><b class="font-bold text-[#222]">11x17</b><br>27.94 厘米 x 43.18 厘米</span></div>
      <div class="h-[96px] flex items-start pt-[11px]"><span class="w-[120px] h-[76px]"></span><span class="mt-[4px] leading-[34px]"><b class="font-bold text-[#222]">4x6</b><br>10.16 厘米 x 15.24 厘米</span></div>
      <div class="h-[96px] flex items-start pt-[11px]"><span class="w-[120px] h-[76px]"></span><span class="mt-[4px] leading-[34px]"><b class="font-bold text-[#222]">5x8</b><br>12.7 厘米 x 20.32 厘米</span></div>
      <div class="h-[96px] flex items-start pt-[11px]"><span class="w-[120px] h-[76px] flex items-center justify-center"><span class="w-[42px] h-[59px] border-2 border-[#444] bg-[#f9f9f9]"></span></span><span class="mt-[4px] leading-[34px]"><b class="font-bold text-[#222]">A3</b><br>29.7 厘米 x 42 厘米</span></div>
      <div class="h-[96px] flex items-start pt-[10px] bg-[#e8e8e8]"><span class="ml-[20px] w-[80px] mr-[20px] h-[80px] bg-white flex items-center justify-center"><span class="w-[34px] h-[47px] border-2 border-[#444] bg-[#f9f9f9]"></span></span><span class="mt-[5px] leading-[34px]"><b class="font-bold text-[#222]">A4</b><br>21 厘米 x 29.7 厘米</span></div>
      <div class="h-[96px] flex items-start pt-[11px]"><span class="w-[120px] h-[76px] flex items-center justify-center"><span class="w-[28px] h-[35px] border-2 border-[#444] bg-[#f9f9f9]"></span></span><span class="mt-[4px] leading-[34px]"><b class="font-bold text-[#222]">A5</b><br>14.8 厘米 x 21 厘米</span></div>
      <div class="h-[96px] flex items-start pt-[11px]"><span class="w-[120px] h-[76px]"></span><span class="mt-[4px] leading-[34px]"><b class="font-bold text-[#222]">A6</b><br>10.5 厘米 x 14.8 厘米</span></div>
      <div class="h-[96px] flex items-start pt-[11px]"><span class="w-[120px] h-[76px]"></span><span class="mt-[4px] leading-[34px]"><b class="font-bold text-[#222]">B4 (JIS)</b><br>25.7 厘米 x 36.4 厘米</span></div>
      <div class="h-[96px] flex items-start pt-[11px]"><span class="w-[120px] h-[76px]"></span><span class="mt-[4px] leading-[34px]"><b class="font-bold text-[#222]">B5 (JIS)</b><br>18.2 厘米 x 25.7 厘米</span></div>
      <!-- scrollbar -->
      <div class="absolute right-0 top-0 bottom-0 w-[35px] bg-[#f5f5f5] flex flex-col items-center pt-[14px]">
        <svg width="18" height="10" viewBox="0 0 18 10"><path d="M9 0l9 10H0z" fill="#777"/></svg>
        <span class="mt-[11px] w-[16px] h-[527px] bg-[#777]"></span>
        <svg class="mt-auto mb-[12px]" width="18" height="12" viewBox="0 0 18 12"><path d="M0 0h18l-9 12z" fill="#777"/></svg>
      </div>
    </div>
    <div class="h-[2px] bg-[#d0d0d0] mx-[2px]"></div>
    <div class="flex-1 pl-[74px] flex items-center">其他纸张大小(<span class="underline">A</span>)...</div>
  </div>

  <!-- annotation: red frame around A4 -->
  <div class="absolute z-30 left-[323px] top-[1082px] w-[448px] h-[116px] rounded-[6px] border-[13px] border-[#ed1c24]"></div>

  <!-- blurred account -->
  <svg class="absolute z-30 left-[3260px] top-[22px]" width="180" height="100" viewBox="0 0 180 100" shape-rendering="crispEdges">
    <path d="M129 0h11v11h-11zM140 0h11v11h-11z" fill="#5f8bd0"/><rect x="151" y="0" width="11" height="11" fill="#c9ced8"/>
    <rect x="30" y="11" width="33" height="11" fill="#87a9e0"/><rect x="74" y="11" width="33" height="11" fill="#8fb0e4"/><rect x="129" y="11" width="44" height="11" fill="#aeb0b4"/>
    <rect x="41" y="22" width="22" height="11" fill="#84a6de"/><rect x="63" y="22" width="55" height="11" fill="#7ea2dd"/><rect x="118" y="22" width="11" height="11" fill="#6f94d4"/><rect x="129" y="22" width="22" height="11" fill="#c8c8c8"/><rect x="151" y="22" width="11" height="11" fill="#9a9a9a"/><rect x="162" y="22" width="11" height="11" fill="#d5d5d5"/>
    <rect x="52" y="33" width="22" height="11" fill="#2f6cc8"/><rect x="74" y="33" width="11" height="11" fill="#6f98da"/><rect x="96" y="33" width="22" height="11" fill="#3a73ca"/><rect x="129" y="33" width="33" height="11" fill="#cfd0d4"/><rect x="162" y="33" width="11" height="11" fill="#5a86cc"/>
    <rect x="129" y="44" width="11" height="11" fill="#3a73ca"/><rect x="140" y="44" width="22" height="11" fill="#c0c8d8"/>
    <rect x="0" y="66" width="11" height="11" fill="#6d93d4"/><rect x="11" y="66" width="22" height="11" fill="#c4d2ea"/><rect x="33" y="66" width="11" height="11" fill="#2f6cc8"/><rect x="44" y="66" width="22" height="11" fill="#7ea2dd"/><rect x="77" y="66" width="33" height="11" fill="#5f8bd0"/><rect x="121" y="66" width="33" height="11" fill="#5f8bd0"/><rect x="154" y="66" width="22" height="11" fill="#7a9edb"/>
    <rect x="121" y="78" width="55" height="11" fill="#e2e2e2"/><rect x="110" y="89" width="66" height="11" fill="#e8e8e8"/>
  </svg>

  <script>
    // rulers: just repeated ticks and numbers, no point writing them out by hand
    const tick = 'block w-[1px] h-[12px] bg-[#555]';
    const addTicks = (id, n, w) => {
      const el = document.getElementById(id);
      for (let i = 0; i < n; i++) {
        const c = document.createElement('span');
        c.className = 'shrink-0 flex';
        c.style.width = w + 'px';
        c.innerHTML = '<span class="' + tick + '"></span>';
        el.appendChild(c);
      }
    };
    addTicks('hruler-left', 17, 14);
    addTicks('hruler-right', 17, 14);
    const hr = document.getElementById('hruler');
    for (let i = 1; i <= 39; i++) {
      const c = document.createElement('span');
      c.className = 'relative shrink-0 w-[28px] h-[12px] flex';
      c.innerHTML = '<span class="' + tick + '"></span><span class="absolute left-[1px] w-[27px] top-[-2px] text-center text-[13px] leading-[16px] text-[#555]">' + i + '</span>';
      hr.appendChild(c);
    }
    const vtop = document.getElementById('vruler-top');
    for (let i = 0; i < 8; i++) {
      const c = document.createElement('span');
      c.className = 'block shrink-0 w-[12px] h-[1px] bg-[#555] mb-[19.700px]';
      vtop.appendChild(c);
    }
    const vr = document.getElementById('vruler');
    for (let i = 1; i <= 33; i++) {
      const c = document.createElement('span');
      c.className = 'relative block shrink-0 h-[41.600px] w-full';
      c.innerHTML = '<span class="absolute left-[14px] top-0 w-[12px] h-[1px] bg-[#555]"></span><span class="absolute left-0 w-full top-[11px] text-center text-[13px] leading-[20px] text-[#555] rotate-90">' + i + '</span>';
      vr.appendChild(c);
    }
  </script>
</body>
</html>
